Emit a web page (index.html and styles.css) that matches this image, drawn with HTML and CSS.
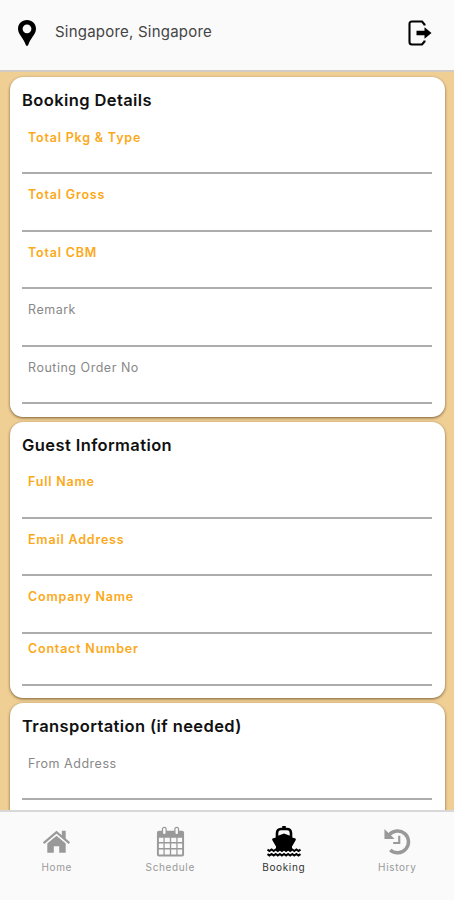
FILE: index.html
```html
<!DOCTYPE html>
<html lang="en">
<head>
<meta charset="utf-8">
<title>Booking</title>
<link rel="stylesheet" href="styles.css">
</head>
<body>
<div class="app">
  <header class="topbar">
    <svg class="pin" viewBox="0 0 18 26"><path fill-rule="evenodd" d="M9 0C3.900 0 0 3.900 0 8.800 0 14.500 5.500 18 7.800 25Q9 27 10.200 25C12.500 18 18 14.500 18 8.800 18 3.900 14.100 0 9 0ZM9 4.400A4.400 4.400 0 1 1 9 13.200 4.400 4.400 0 0 1 9 4.400Z"/></svg>
    <span class="place">Singapore, Singapore</span>
    <svg class="logout" viewBox="0 0 24 26"><path d="M16.500 5.500V4.500L14 1.500H4Q1.500 1.500 1.500 4V22Q1.500 24.500 4 24.500H14L16.500 21.500V20.500" fill="none" stroke="#000" stroke-width="2.100"/><path d="M8.500 10.700H16.500V7.300L23.500 13 16.500 18.700V15.300H8.500Z"/></svg>
  </header>
  <main class="content">
    <section class="card">
      <h2>Booking Details</h2>
      <div class="field required"><label>Total Pkg &amp; Type</label></div>
      <div class="field required"><label>Total Gross</label></div>
      <div class="field required"><label>Total CBM</label></div>
      <div class="field"><label>Remark</label></div>
      <div class="field"><label>Routing Order No</label></div>
    </section>
    <section class="card guest">
      <h2>Guest Information</h2>
      <div class="field required"><label>Full Name</label></div>
      <div class="field required"><label>Email Address</label></div>
      <div class="field required"><label>Company Name</label></div>
      <div class="field required compact"><label>Contact Number</label></div>
    </section>
    <section class="card">
      <h2>Transportation (if needed)</h2>
      <div class="field"><label>From Address</label></div>
      <div class="field"></div>
    </section>
  </main>
  <nav class="tabs">
    <a class="tab">
      <svg viewBox="0 0 32 32"><path d="M16 9.500 25.500 17V27H18.800V20.500H13.200V27H6.500V17Z"/><path d="M2.700 17.600 16 6.200 29.300 17.600" fill="none" stroke="#fafafa" stroke-width="4.600"/><path d="M2.700 17.200 16 5.800 29.300 17.200" fill="none" stroke="currentColor" stroke-width="2.300"/><path d="M21.500 4.500H25.500V13L21.500 10Z"/></svg>
      <span>Home</span>
    </a>
    <a class="tab">
      <svg viewBox="0 0 32 32"><path fill-rule="evenodd" d="M4 4.500H28Q30 4.500 30 6.500V29Q30 31 28 31H4Q2 31 2 29V6.500Q2 4.500 4 4.500ZM4 11.500V16H8.700V11.500ZM10 11.500V16H15.300V11.500ZM16.700 11.500V16H22V11.500ZM23.300 11.500V16H28V11.500ZM4 17.500V22.300H8.700V17.500ZM10 17.500V22.300H15.300V17.500ZM16.700 17.500V22.300H22V17.500ZM23.300 17.500V22.300H28V17.500ZM4 23.700V29H8.700V23.700ZM10 23.700V29H15.300V23.700ZM16.700 23.700V29H22V23.700ZM23.300 23.700V29H28V23.700Z"/><rect class="ring" x="7.700" y="1" width="3.800" height="7.500" rx="1.800"/><rect class="ring" x="20.500" y="1" width="3.800" height="7.500" rx="1.800"/></svg>
      <span>Schedule</span>
    </a>
    <a class="tab active">
      <svg class="ship" viewBox="0 0 34 32"><path d="M15.200 0H18.800V3H15.200Z"/><path d="M10 12V7.500Q10 3 14 3H20Q24 3 24 7.500V12" fill="none" stroke="currentColor" stroke-width="2.600"/><path d="M9 11.500V10.500L17 7.500 25 10.500V11.500L28.500 12.500Q29.300 13 28.500 14.500L25 20.500V24H9V20.500L5.500 14.500Q4.700 13 5.500 12.500Z"/><path class="wave" d="M.5 23.500 2.500 25 4.600 23.500 6.700 25 8.700 23.500 10.800 25 12.900 23.500 14.900 25 17 23.500 19.100 25 21.100 23.500 23.200 25 25.300 23.500 27.300 25 29.400 23.500 31.500 25 33.500 23.500M.5 28 2.500 29.500 4.600 28 6.700 29.500 8.700 28 10.800 29.500 12.900 28 14.900 29.500 17 28 19.100 29.500 21.100 28 23.200 29.500 25.300 28 27.300 29.500 29.400 28 31.500 29.500 33.500 28"/></svg>
      <span>Booking</span>
    </a>
    <a class="tab">
      <svg viewBox="0 0 32 32"><path d="M7.500 8.500A11.300 11.300 0 1 1 8.500 24.300" fill="none" stroke="currentColor" stroke-width="3.600"/><path d="M2.500 2.500V13H13Z"/><path d="M17.800 9.500V17H11.500" fill="none" stroke="currentColor" stroke-width="2.200"/></svg>
      <span>History</span>
    </a>
  </nav>
</div>
</body>
</html>
```

FILE: styles.css
```css
* { box-sizing: border-box; }

body {
  margin: 0;
  font-family: Inter, "Liberation Sans", sans-serif;
}

.app {
  height: 900px;
  display: flex;
  flex-direction: column;
  overflow: hidden;
  background: #f0cf95;
}

.topbar {
  flex: none;
  height: 72px;
  display: flex;
  align-items: center;
  padding: 0 22px 4px 18px;
  background: #fafafa;
  border-bottom: 2px solid #d0cbc4;
}

.pin { width: 18px; height: 26px; }

.place {
  flex: 1;
  margin: -4px 0 0 19px;
  font-size: 15px;
  letter-spacing: 0.22px;
  color: #444;
}

.logout { width: 24px; height: 26px; }

.content {
  flex: 1;
  min-height: 0;
  overflow: hidden;
  display: flex;
  flex-direction: column;
  gap: 5px;
  padding: 5px 9.500px 0;
}

.card {
  flex: none;
  height: 339.500px;
  padding: 0 12.500px;
  background: #fff;
  border-radius: 13px;
  box-shadow: 0 1px 3px rgba(70, 45, 10, 0.7);
}

.card.guest { height: 276.500px; }

h2 {
  height: 39.500px;
  margin: 0;
  padding-top: 13px;
  font-size: 16.500px;
  font-weight: 600;
  line-height: 20px;
  letter-spacing: 0.4px;
  color: #111;
  white-space: nowrap;
}

.field {
  height: 57.600px;
  padding: 13px 6px 0;
  border-bottom: 2px solid #adadad;
  font-size: 12.500px;
  line-height: 16px;
  letter-spacing: 0.52px;
  color: #888;
}

.field label { display: block; white-space: nowrap; }
.field.required { color: #fba919; font-weight: 600; letter-spacing: 0.8px; }
.field.compact { height: 51.800px; padding-top: 7px; }

.tabs {
  flex: none;
  height: 90px;
  display: grid;
  grid-template-columns: repeat(4, 1fr);
  padding-top: 14px;
  background: #fafafa;
  border-top: 2px solid #d8d8d8;
}

.tab {
  display: flex;
  flex-direction: column;
  align-items: center;
  color: #999;
  font-size: 10px;
  line-height: 14px;
  letter-spacing: 0.65px;
}

.tab svg { width: 31px; height: 32px; margin-bottom: 2px; fill: currentColor; }
.tab svg.ship { width: 34px; }
.tab.active { color: #000; }
.tab.active span { color: #333; }

.ring { fill: #fafafa; stroke: currentColor; stroke-width: 1.300; }
.wave { fill: none; stroke: currentColor; stroke-width: 2; }
```
